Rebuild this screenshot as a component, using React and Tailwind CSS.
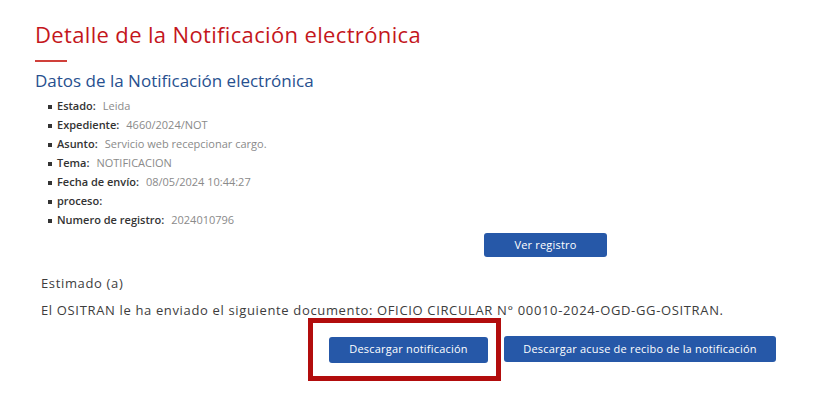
export default function App() {
  const fields = [
    { label: "Estado:", value: "Leida" },
    { label: "Expediente:", value: "4660/2024/NOT" },
    { label: "Asunto:", value: "Servicio web recepcionar cargo." },
    { label: "Tema:", value: "NOTIFICACION" },
    { label: "Fecha de envío:", value: "08/05/2024 10:44:27" },
    { label: "proceso:", value: "" },
    { label: "Numero de registro:", value: "2024010796" },
  ];

  return (
    <div
      className="w-[813px] h-[418px] bg-white overflow-hidden"
      style={{ fontFamily: '"Open Sans", "Liberation Sans", sans-serif' }}
    >
      <div className="pl-[35px] pt-[20px]">
        {/* Title */}
        <h1 className="text-[22px] leading-[28px] text-[#c4161c] tracking-[0.35px]">
          Detalle de la Notificación electrónica
        </h1>
        <div className="mt-[12px] w-[32px] h-[2px] bg-[#d0403a]" />

        <h2 className="mt-[8px] text-[17px] leading-[22px] text-[#27508f]">
          Datos de la Notificación electrónica
        </h2>

        {/* Fields */}
        <ul className="mt-[5px] pl-[13px] flex flex-col">
          {fields.map((f, i) => (
            <li key={i} className="h-[19px] flex items-center gap-[5px] text-[11px]">
              <span className="w-[4px] h-[4px] bg-[#333]" />
              <span className="font-semibold text-[#333]">{f.label}</span>
              <span className="ml-[2px] text-[#8a8a8a]">{f.value}</span>
            </li>
          ))}
        </ul>

        <div className="mt-[1px] pl-[449px]">
          <button className="w-[123px] h-[24px] rounded-[3px] bg-[#2658a8] text-white text-[11px] tracking-[0.2px]">
            Ver registro
          </button>
        </div>

        {/* Message */}
        <div className="pl-[6px] mt-[16px] text-[13px] text-[#3d3d3d] tracking-[0.65px]">
          <p className="leading-[20px]">Estimado (a)</p>
          <p className="mt-[7px] leading-[20px]">
            El OSITRAN le ha enviado el siguiente documento: OFICIO CIRCULAR N° 00010-2024-OGD-GG-OSITRAN.
          </p>
        </div>

        {/* Actions */}
        <div className="mt-[15px] flex items-center gap-[16px] pl-[294px]">
          <div className="relative">
            <button className="w-[159px] h-[26px] rounded-[3px] bg-[#2658a8] text-white text-[11px] tracking-[0.2px]">
              Descargar notificación
            </button>
            <div className="absolute left-[-21px] top-[-17px] w-[193px] h-[63px] border-[5px] border-[#b20d0d]" />
          </div>
          <button className="w-[272px] h-[26px] rounded-[3px] bg-[#2658a8] text-white text-[11px] tracking-[0.2px]">
            Descargar acuse de recibo de la notificación
          </button>
        </div>
      </div>
    </div>
  );
}
